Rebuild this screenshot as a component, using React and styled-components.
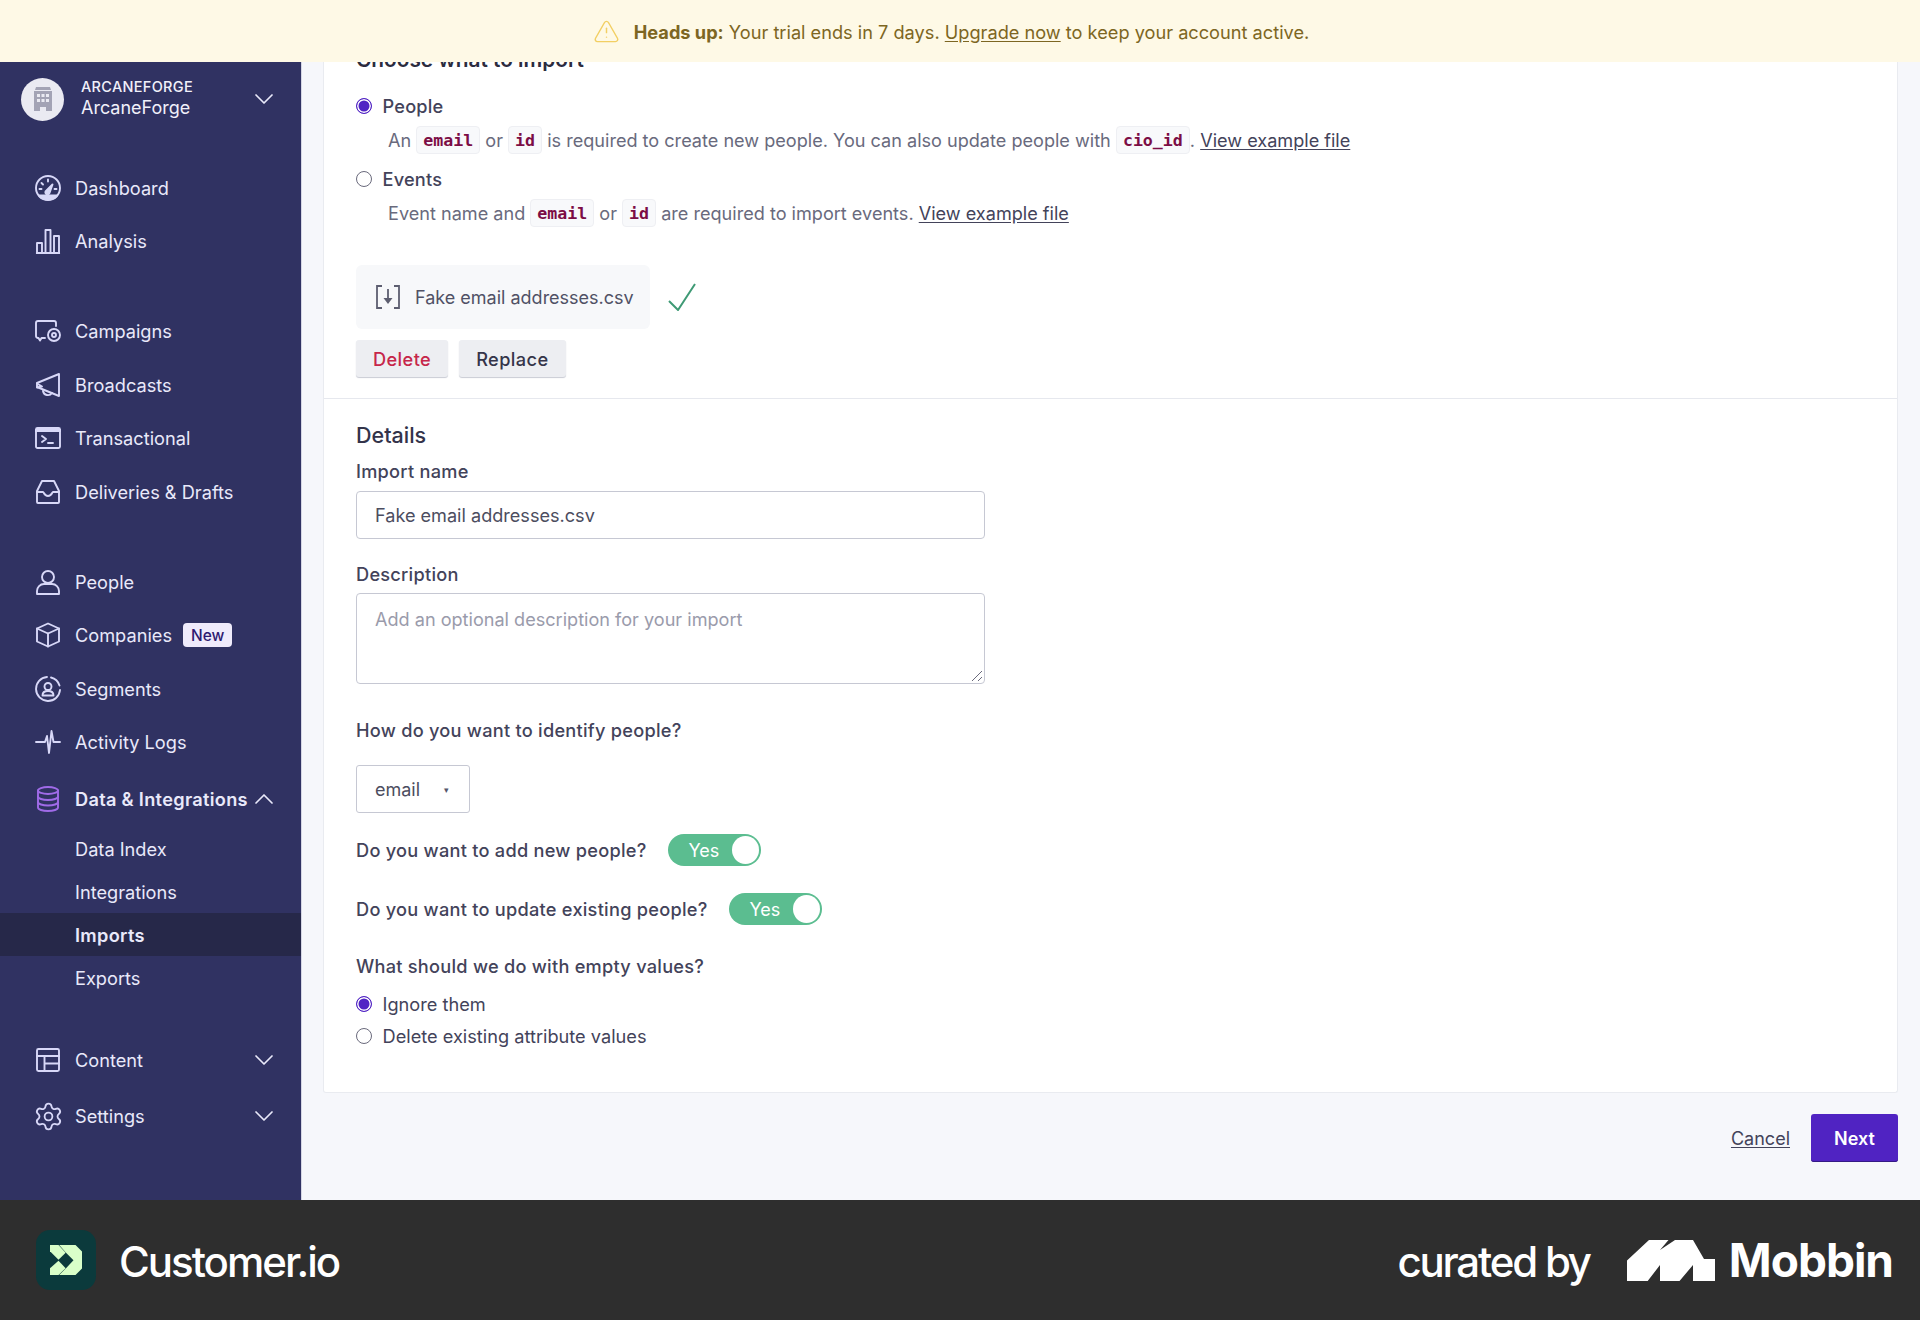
import React from 'react'
import styled, { createGlobalStyle } from 'styled-components'
import { ChevronDown, ChevronUp, Settings, AlertTriangle } from 'lucide-react'

const GlobalStyle = createGlobalStyle`
  html, body { margin: 0; padding: 0; }
  body {
    font-family: Inter, "Liberation Sans", sans-serif;
    background: #f6f7fb;
    -webkit-font-smoothing: antialiased;
  }
  * { box-sizing: border-box; }
`

const Page = styled.div`
  width: 1920px;
  height: 1320px;
  display: flex;
  flex-direction: column;
  overflow: hidden;
`
const Banner = styled.div`
  height: 62px;
  flex: none;
  display: flex;
  align-items: center;
  justify-content: center;
  gap: 14px;
  padding: 1px 18px 0 0;
  background: #fef9e6;
  color: #7d6622;
  font-size: 18.2px;
  position: relative;
  z-index: 2;
  svg { color: #f2cf63; }
  b { font-weight: 700; }
  a { color: inherit; text-decoration: underline; text-underline-offset: 2px; }
`
const Body = styled.div`
  height: 1138px;
  flex: none;
  display: flex;
`
const Sidebar = styled.nav`
  width: 302px;
  flex: none;
  background: #303262;
  color: #e9e9fa;
  font-size: 18.2px;
  border-right: 1px solid #d5d6e4;
`
const Account = styled.div`
  display: flex;
  align-items: center;
  height: 72px;
  margin-top: 1px;
  padding: 0 21px;
  margin-bottom: 26px;
`
const Avatar = styled.div`
  width: 43px;
  height: 43px;
  border-radius: 50%;
  background: #eaeaf2;
  display: flex;
  align-items: center;
  justify-content: center;
  margin-right: 17px;
  flex: none;
`
const AccountText = styled.div`
  flex: 1;
  display: flex;
  flex-direction: column;
  padding-bottom: 3px;
  color: #f0f0fa;
`
const AccountOrg = styled.div`
  font-size: 14.5px;
  font-weight: 500;
  letter-spacing: 0.3px;
  line-height: 20px;
`
const AccountName = styled.div`
  font-size: 18px;
  line-height: 22px;
`
const NavGroup = styled.div`
  margin-bottom: ${p => p.$gap || 37}px;
`
const NavItem = styled.div`
  height: ${p => p.$h || 53.4}px;
  margin-top: ${p => p.$top || 0}px;
  display: flex;
  align-items: center;
  padding: 0 21px 0 35px;
  font-weight: ${p => (p.$bold ? 600 : 400)};
  letter-spacing: ${p => (p.$bold ? '0.3px' : '0')};
  svg.lead {
    width: 26px;
    height: 26px;
    margin-right: 14px;
    flex: none;
  }
  svg.gear {
    width: 31px;
    height: 31px;
    margin: 0 11.5px 0 -2.5px;
    flex: none;
  }
`
const NavLabel = styled.span`
  flex: ${p => (p.$grow ? 1 : 'none')};
`
const NewTag = styled.span`
  margin-left: 11px;
  background: #efebfb;
  color: #2e1a70;
  font-size: 15.5px;
  font-weight: 500;
  height: 24px;
  padding: 0 8px;
  border-radius: 4px;
  display: flex;
  align-items: center;
`
const SubItem = styled.div`
  height: 43px;
  display: flex;
  align-items: center;
  padding-left: 75px;
  font-weight: ${p => (p.$active ? 600 : 400)};
  letter-spacing: ${p => (p.$active ? '0.3px' : '0')};
  background: ${p => (p.$active ? '#262849' : 'transparent')};
`
const Main = styled.main`
  flex: 1;
  height: 100%;
  overflow: hidden;
  padding: 0 22px 0 21px;
`
const Card = styled.section`
  margin-top: -16px;
  background: #fff;
  border: 1px solid #e9ebf0;
  border-top: 0;
  border-radius: 3px;
  height: 1047px;
  padding: 0 32px;
  color: #43435a;
`
const TopBlock = styled.div`
  margin: 0 -32px;
  padding: 0 32px;
  height: 353px;
  border-bottom: 1px solid #e6e8ee;
`
const Heading = styled.h2`
  margin: 0;
  font-size: 20.8px;
  line-height: 28px;
  font-weight: 600;
  color: #2c2c3e;
`
const RadioRow = styled.div`
  display: flex;
  align-items: center;
  gap: 10.5px;
  height: 26px;
  font-size: 18.2px;
  font-weight: ${p => (p.$strong ? 500 : 400)};
  letter-spacing: ${p => (p.$strong ? '0.2px' : '0')};
  margin-top: ${p => p.$top || 0}px;
`
const Radio = styled.span`
  width: 16px;
  height: 16px;
  border-radius: 50%;
  flex: none;
  border: 1.5px solid ${p => (p.$on ? '#5124c4' : '#6a6a7c')};
  background: ${p => (p.$on ? '#5124c4' : '#fff')};
  box-shadow: ${p => (p.$on ? 'inset 0 0 0 1.5px #fff' : 'none')};
`
const Hint = styled.div`
  display: flex;
  align-items: center;
  height: 30px;
  margin: 6px 0 0 32px;
  font-size: 18.1px;
  color: #696a7d;
  white-space: pre;
  a { color: #43435a; text-decoration: underline; text-underline-offset: 2px; }
`
const Code = styled.code`
  font-family: "DejaVu Sans Mono", "Liberation Mono", monospace;
  font-size: 16.6px;
  font-weight: 700;
  color: #7c0d45;
  background: #f8f9fb;
  border: 1px solid #eeeff3;
  border-radius: 4px;
  height: 28px;
  padding: 0 6px;
  display: flex;
  align-items: center;
`
const FileRow = styled.div`
  display: flex;
  align-items: center;
  gap: 18px;
  margin-top: 37px;
`
const FileBox = styled.div`
  width: 294px;
  height: 64px;
  padding-left: 20px;
  display: flex;
  align-items: center;
  gap: 15px;
  background: #f7f8fa;
  border-radius: 6px;
  font-size: 18px;
  color: #505165;
`
const ButtonRow = styled.div`
  display: flex;
  gap: 11px;
  margin-top: 11px;
`
const GreyButton = styled.button`
  height: 37px;
  padding: 0 17px;
  border: 0;
  border-radius: 3px;
  background: #edeef2;
  box-shadow: 0 1px 1px #c9cbd4;
  font: 500 18.2px Inter, sans-serif;
  letter-spacing: 0.4px;
  color: ${p => (p.$danger ? '#c6264a' : '#35354a')};
`
const SectionTitle = styled.h3`
  margin: 22px 0 0;
  font-size: 21.5px;
  line-height: 28px;
  font-weight: 500;
  color: #33334a;
`
const Label = styled.div`
  font-size: 18.2px;
  font-weight: 500;
  letter-spacing: 0.25px;
  line-height: 24px;
  color: #43435a;
  margin-top: ${p => p.$top || 0}px;
`
const TextBox = styled.div`
  width: 629px;
  height: ${p => p.$h || 48}px;
  margin-top: ${p => p.$top || 8}px;
  padding: ${p => (p.$area ? '14px' : '0')} 18px 0;
  display: flex;
  align-items: ${p => (p.$area ? 'flex-start' : 'center')};
  border: 1.5px solid #c6c8d3;
  border-radius: 4px;
  font-size: 18.1px;
  color: ${p => (p.$placeholder ? '#9a9bab' : '#4c4d60')};
  position: relative;
`
const Resize = styled.svg`
  position: absolute;
  right: 1px;
  bottom: 1px;
`
const SelectBox = styled.div`
  width: 114px;
  height: 48px;
  margin-top: 23px;
  padding-left: 18px;
  display: flex;
  align-items: center;
  border: 1.5px solid #c6c8d3;
  border-radius: 3px;
  font-size: 18px;
  color: #4c4d60;
  span { margin-left: 24px; font-size: 9px; color: #55566a; }
`
const ToggleRow = styled.div`
  display: flex;
  align-items: center;
  gap: 21px;
  height: 32px;
  margin-top: ${p => p.$top}px;
  font-size: 18.2px;
  font-weight: 500;
  letter-spacing: 0.25px;
`
const Toggle = styled.div`
  width: 93px;
  height: 32px;
  border-radius: 16px;
  background: #5bbd90;
  color: #fff;
  font-size: 18px;
  font-weight: 400;
  letter-spacing: 0;
  padding: 0 2px 0 21px;
  display: flex;
  align-items: center;
  justify-content: space-between;
  i {
    width: 27px;
    height: 28px;
    border-radius: 50%;
    background: #fff;
  }
`
const Actions = styled.div`
  display: flex;
  justify-content: flex-end;
  align-items: center;
  gap: 21px;
  margin-top: 21px;
  a { font-size: 18px; color: #43435a; text-decoration: underline; text-underline-offset: 2px; }
`
const Primary = styled.button`
  width: 87px;
  height: 48px;
  border: 0;
  border-radius: 3px;
  background: #5023c2;
  box-shadow: inset 0 -1px 0 #351a85;
  color: #fff;
  font: 600 18px Inter, sans-serif;
`
const Footer = styled.footer`
  flex: 1;
  background: #2e2e2e;
  display: flex;
  align-items: center;
  padding: 0 27px 0 36px;
  color: #fff;
`
const BrandIcon = styled.div`
  width: 60px;
  height: 60px;
  border-radius: 14px;
  background: #0b3a3c;
  display: flex;
  align-items: center;
  justify-content: center;
`
const BrandName = styled.div`
  margin: 2px 0 0 23px;
  flex: 1;
  font-size: 42px;
  font-weight: 500;
  letter-spacing: -2px;
`
const Curated = styled.div`
  margin: 2px 37px 0 0;
  font-size: 42px;
  font-weight: 500;
  letter-spacing: -2.2px;
`
const MobbinName = styled.div`
  margin-left: 14px;
  font-size: 46px;
  font-weight: 700;
  letter-spacing: -1px;
`

const Lead = ({ children, color }) => (
  <svg
    className="lead"
    viewBox="0 0 26 26"
    fill="none"
    stroke={color || '#d8d8f8'}
    strokeWidth="1.9"
    strokeLinecap="round"
    strokeLinejoin="round"
  >
    {children}
  </svg>
)

const icons = {
  dashboard: (
    <Lead>
      <circle cx="13" cy="13" r="12" />
      <path d="M4 20.500h18a12 12 0 0 1-18 0z" fill="#d8d8f8" />
      <path d="M10.500 16.500l7-7-3 8.500a2 2 0 0 1-4-1.500z" fill="#d8d8f8" />
      <path d="M13 4.500v2M6.500 8l1.500 1.500M4.500 14h2M21.500 14h-2" />
    </Lead>
  ),
  analysis: (
    <Lead>
      <path d="M2 25h22" strokeWidth="2.200" />
      <rect x="2" y="15" width="5" height="10" />
      <rect x="10.500" y="2" width="5" height="23" />
      <rect x="19" y="8" width="5" height="17" />
    </Lead>
  ),
  campaigns: (
    <Lead>
      <path d="M10 20H6.500L5 22.500 3.500 20H3a2 2 0 0 1-2-2V5a2 2 0 0 1 2-2h16a2 2 0 0 1 2 2v3" />
      <circle cx="19" cy="17" r="6" />
      <circle cx="19" cy="17" r="2" />
    </Lead>
  ),
  broadcasts: (
    <Lead>
      <path d="M24 2L2 11v4l22 9z" />
      <path d="M2 11.500l5 3-5 1M8 19a5 5 0 0 0 9 2" />
    </Lead>
  ),
  transactional: (
    <Lead>
      <rect x="1" y="3" width="24" height="20" rx="1.500" />
      <path d="M1 5.500h24" strokeWidth="3" />
      <path d="M7 11l4 3-4 3M13 18h5" />
    </Lead>
  ),
  deliveries: (
    <Lead>
      <path d="M2 12L7 2h12l5 10v11a1 1 0 0 1-1 1H3a1 1 0 0 1-1-1z" />
      <path d="M2 13h6c1 0 1 4 5 4s4-4 5-4h6" />
    </Lead>
  ),
  people: (
    <Lead>
      <circle cx="13" cy="8" r="6" />
      <path d="M2 25v-3a7 7 0 0 1 7-7h8a7 7 0 0 1 7 7v3z" />
    </Lead>
  ),
  companies: (
    <Lead>
      <path d="M13 1.500l11 5v13l-11 5-11-5v-13z" />
      <path d="M2 6.500l11 5 11-5M13 11.500v13" />
    </Lead>
  ),
  segments: (
    <Lead>
      <path d="M12 1a12 12 0 1 0 13 13M16 1.500a12 12 0 0 1 8.500 8" />
      <circle cx="13" cy="10.500" r="3.500" />
      <path d="M7.500 19.500c0-3 2-4.500 5.500-4.500s5.500 1.500 5.500 4.500z" />
    </Lead>
  ),
  activity: (
    <Lead>
      <path d="M1 13h9L12 7l2 17 2.500-22 2 11H25" />
    </Lead>
  ),
  data: (
    <Lead color="#a06be8">
      <ellipse cx="13" cy="4.500" rx="10" ry="3.500" />
      <path d="M3 4.500v17c0 2 4.500 3.500 10 3.500s10-1.500 10-3.500v-17" />
      <path d="M3 10.500c0 2 4.500 3.500 10 3.500s10-1.500 10-3.500M3 16c0 2 4.500 3.500 10 3.500S23 18 23 16" />
    </Lead>
  ),
  content: (
    <Lead>
      <rect x="2" y="2" width="22" height="22" rx="1.500" />
      <path d="M2 9h22M9.500 9v15M9.500 16.500H24" />
    </Lead>
  ),
}

const Chevron = ({ up }) =>
  up ? (
    <ChevronUp size={32} strokeWidth={1.3} />
  ) : (
    <ChevronDown size={32} strokeWidth={1.3} />
  )

export default function App() {
  return (
    <Page>
      <GlobalStyle />
      <Banner>
        <AlertTriangle size={27} strokeWidth={1.3} />
        <span>
          <b>Heads up:</b> Your trial ends in 7 days. <a href="#u">Upgrade now</a> to keep your
          account active.
        </span>
      </Banner>
      <Body>
        <Sidebar>
          <Account>
            <Avatar>
              <svg width="20" height="24" viewBox="0 0 20 24" fill="#a3a3b5">
                <path d="M3 0h14l1 3H2z" />
                <path
                  fillRule="evenodd"
                  d="M1 4h18v20h-6v-4H7v4H1zM4 7v3h3V7zm4.500 0v3h3V7zM13 7v3h3V7zM4 12v3h3v-3zm4.500 0v3h3v-3zm4.500 0v3h3v-3z"
                />
              </svg>
            </Avatar>
            <AccountText>
              <AccountOrg>ARCANEFORGE</AccountOrg>
              <AccountName>ArcaneForge</AccountName>
            </AccountText>
            <Chevron />
          </Account>

          <NavGroup>
            <NavItem>{icons.dashboard}<NavLabel>Dashboard</NavLabel></NavItem>
            <NavItem>{icons.analysis}<NavLabel>Analysis</NavLabel></NavItem>
          </NavGroup>
          <NavGroup>
            <NavItem>{icons.campaigns}<NavLabel>Campaigns</NavLabel></NavItem>
            <NavItem>{icons.broadcasts}<NavLabel>Broadcasts</NavLabel></NavItem>
            <NavItem>{icons.transactional}<NavLabel>Transactional</NavLabel></NavItem>
            <NavItem>{icons.deliveries}<NavLabel>Deliveries &amp; Drafts</NavLabel></NavItem>
          </NavGroup>
          <NavGroup $gap={2}>
            <NavItem>{icons.people}<NavLabel>People</NavLabel></NavItem>
            <NavItem>
              {icons.companies}
              <NavLabel>Companies</NavLabel>
              <NewTag>New</NewTag>
            </NavItem>
            <NavItem>{icons.segments}<NavLabel>Segments</NavLabel></NavItem>
            <NavItem>{icons.activity}<NavLabel>Activity Logs</NavLabel></NavItem>
            <NavItem $bold $top={3}>
              {icons.data}
              <NavLabel $grow>Data &amp; Integrations</NavLabel>
              <Chevron up />
            </NavItem>
          </NavGroup>
          <NavGroup $gap={33}>
            <SubItem>Data Index</SubItem>
            <SubItem>Integrations</SubItem>
            <SubItem $active>Imports</SubItem>
            <SubItem>Exports</SubItem>
          </NavGroup>
          <NavItem $h={56}>{icons.content}<NavLabel $grow>Content</NavLabel><Chevron /></NavItem>
          <NavItem $h={56}>
            <Settings className="gear" color="#d8d8f8" strokeWidth={1.4} />
            <NavLabel $grow>Settings</NavLabel>
            <Chevron />
          </NavItem>
        </Sidebar>

        <Main>
          <Card>
            <TopBlock>
              <Heading>Choose what to import</Heading>
              <RadioRow $strong $top={19}><Radio $on />People</RadioRow>
              <Hint>
                An <Code>email</Code> or <Code>id</Code> is required to create new people. You can
                also update people with <Code>cio_id</Code>. <a href="#e">View example file</a>
              </Hint>
              <RadioRow $strong $top={11}><Radio />Events</RadioRow>
              <Hint>
                Event name and <Code>email</Code> or <Code>id</Code> are required to import events.{' '}
                <a href="#e">View example file</a>
              </Hint>
              <FileRow>
                <FileBox>
                  <svg width="24" height="24" viewBox="0 0 24 24" fill="none" stroke="#5d5e70" strokeWidth="1.800">
                    <path d="M6 1H1v22h5M18 1h5v22h-5" />
                    <path d="M12 4v12" />
                    <path d="M7.500 13h9L12 19z" fill="#5d5e70" stroke="none" />
                  </svg>
                  Fake email addresses.csv
                </FileBox>
                <svg width="28" height="28" viewBox="0 0 28 28" fill="none" stroke="#3f9a75" strokeWidth="2">
                  <path d="M1 18l9 9L27 1" />
                </svg>
              </FileRow>
              <ButtonRow>
                <GreyButton $danger>Delete</GreyButton>
                <GreyButton>Replace</GreyButton>
              </ButtonRow>
            </TopBlock>

            <SectionTitle>Details</SectionTitle>
            <Label $top={10}>Import name</Label>
            <TextBox $top={8}>Fake email addresses.csv</TextBox>
            <Label $top={23}>Description</Label>
            <TextBox $area $placeholder $h={91} $top={7}>
              Add an optional description for your import
              <Resize width="12" height="12" viewBox="0 0 12 12" stroke="#6a6a7c" strokeWidth="1">
                <path d="M1 11L11 1M7 11l4-4" />
              </Resize>
            </TextBox>
            <Label $top={34}>How do you want to identify people?</Label>
            <SelectBox>email<span>▾</span></SelectBox>
            <ToggleRow $top={21}>Do you want to add new people?<Toggle>Yes<i /></Toggle></ToggleRow>
            <ToggleRow $top={27}>Do you want to update existing people?<Toggle>Yes<i /></Toggle></ToggleRow>
            <Label $top={29}>What should we do with empty values?</Label>
            <RadioRow $top={13}><Radio $on />Ignore them</RadioRow>
            <RadioRow $top={6}><Radio />Delete existing attribute values</RadioRow>
          </Card>
          <Actions>
            <a href="#c">Cancel</a>
            <Primary>Next</Primary>
          </Actions>
        </Main>
      </Body>
      <Footer>
        <BrandIcon>
          <svg width="32" height="30" viewBox="0 0 94 88" fill="#d9ffc9">
            <path d="M0 0H25L46 23 25 43 0 18z" />
            <path d="M0 68L25 46 46 68 25 88H0z" />
            <path d="M27 0H75L94 19V69L75 88H27L47 68 69 45 47 23z" />
          </svg>
        </BrandIcon>
        <BrandName>Customer.io</BrandName>
        <Curated>curated by</Curated>
        <svg width="88" height="41" viewBox="0 0 88 41" fill="#fff">
          <path d="M0 20.500L22 0H41.500L33 10 48 0H66L77 19H88V41H66V25L52.500 41H33V25L20.700 41H0z" />
        </svg>
        <MobbinName>Mobbin</MobbinName>
      </Footer>
    </Page>
  )
}
